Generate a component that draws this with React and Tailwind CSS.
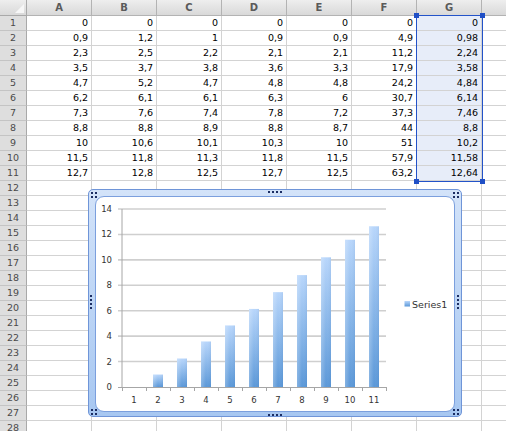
import React from 'react';

const cols = ['A', 'B', 'C', 'D', 'E', 'F', 'G'];

const data = [
    ['0', '0', '0', '0', '0', '0', '0'],
    ['0,9', '1,2', '1', '0,9', '0,9', '4,9', '0,98'],
    ['2,3', '2,5', '2,2', '2,1', '2,1', '11,2', '2,24'],
    ['3,5', '3,7', '3,8', '3,6', '3,3', '17,9', '3,58'],
    ['4,7', '5,2', '4,7', '4,8', '4,8', '24,2', '4,84'],
    ['6,2', '6,1', '6,1', '6,3', '6', '30,7', '6,14'],
    ['7,3', '7,6', '7,4', '7,8', '7,2', '37,3', '7,46'],
    ['8,8', '8,8', '8,9', '8,8', '8,7', '44', '8,8'],
    ['10', '10,6', '10,1', '10,3', '10', '51', '10,2'],
    ['11,5', '11,8', '11,3', '11,8', '11,5', '57,9', '11,58'],
    ['12,7', '12,8', '12,5', '12,7', '12,5', '63,2', '12,64'],
];

// series plotted in the chart = column G
const series = [0, 0.98, 2.24, 3.58, 4.84, 6.14, 7.46, 8.8, 10.2, 11.58, 12.64];

const ROWS = 28;

function HeaderRow() {
    return (
        <div className="flex h-[16px]">
            <div className="relative w-[27px] shrink-0 border-r border-b border-[#a9a9a9] bg-gradient-to-b from-[#eeeeee] to-[#d9d9d9]">
                <div className="absolute right-[2px] bottom-[2px] w-0 h-0 border-l-[9px] border-l-transparent border-b-[9px] border-b-[#f7f7f7]" />
            </div>
            {cols.map(c => (
                <div key={c} className="w-[65px] shrink-0 border-r border-b border-[#b3b3b3] bg-gradient-to-b from-[#eeeeee] to-[#d9d9d9] flex items-center justify-center text-[10px] font-bold text-[#5a5a5a]">
                    {c}
                </div>
            ))}
            <div className="flex-1 border-b border-[#b3b3b3] bg-gradient-to-b from-[#eeeeee] to-[#d9d9d9]" />
        </div>
    );
}

function Row({ n }) {
    const values = data[n - 1] || [];
    return (
        <div className="flex h-[15px]">
            <div className="w-[27px] shrink-0 border-r border-b border-r-[#a9a9a9] border-b-[#c4c4c4] bg-[#dedede] flex items-center justify-center text-[9.5px] text-[#4a4a4a]">
                {n}
            </div>
            {cols.map((c, i) => (
                <div
                    key={c}
                    className={`w-[65px] shrink-0 border-r border-b border-[#d3d3d3] flex items-center justify-end pr-[3px] text-[9.5px] text-black ${i === 6 && n <= 11 ? 'bg-[#e7edf9]' : 'bg-white'}`}
                >
                    {values[i]}
                </div>
            ))}
            <div className="flex-1 border-b border-[#d3d3d3] bg-white" />
        </div>
    );
}

function Dots({ vertical, grid, className }) {
    const dot = 'w-[2px] h-[2px] bg-[#1b2d63]';
    if (grid) {
        return (
            <div className={`absolute grid grid-cols-2 gap-[2px] ${className}`}>
                <div className={dot} /><div className={dot} /><div className={dot} /><div className={dot} />
            </div>
        );
    }
    return (
        <div className={`absolute flex ${vertical ? 'flex-col' : ''} gap-[2px] ${className}`}>
            <div className={dot} /><div className={dot} /><div className={dot} /><div className={dot} />
        </div>
    );
}

function BarChart() {
    const x0 = 27;
    const y0 = 191;
    const unit = 178 / 14;
    const cat = 24;
    const ticks = [0, 2, 4, 6, 8, 10, 12, 14];

    return (
        <svg width="360" height="216" className="block" style={{ fontFamily: '"DejaVu Sans", sans-serif' }}>
            <defs>
                <linearGradient id="bar" x1="0" y1="0" x2="0" y2="1">
                    <stop offset="0" stopColor="#b8d6fb" />
                    <stop offset="1" stopColor="#5b98d8" />
                </linearGradient>
                <linearGradient id="barShade" x1="0" y1="0" x2="1" y2="0">
                    <stop offset="0" stopColor="#ffffff" stopOpacity="0.25" />
                    <stop offset="0.5" stopColor="#ffffff" stopOpacity="0" />
                    <stop offset="1" stopColor="#1d4f8f" stopOpacity="0.08" />
                </linearGradient>
            </defs>

            {ticks.map(t => {
                const y = y0 - t * unit;
                return (
                    <g key={t}>
                        {t > 0 && <line x1={x0 - 4} y1={y} x2={x0 + cat * 11} y2={y} stroke="#cfcfcf" strokeWidth="1.6" />}
                        <text x="17" y={y + 3} textAnchor="end" fontSize="8.5" fill="#333">{t}</text>
                    </g>
                );
            })}

            {series.map((v, i) => {
                const h = v * unit;
                const cx = x0 + cat * i + 12;
                return (
                    <g key={i}>
                        <rect x={cx - 5} y={y0 - h} width="10" height={h} fill="url(#bar)" />
                        <rect x={cx - 5} y={y0 - h} width="10" height={h} fill="url(#barShade)" />
                        <text x={cx} y="207" textAnchor="middle" fontSize="8.5" fill="#333">{i + 1}</text>
                    </g>
                );
            })}

            <line x1={x0} y1={y0 - 14 * unit} x2={x0} y2={y0} stroke="#a6a6a6" strokeWidth="1" />
            <line x1={x0 - 4} y1={y0 + 0.5} x2={x0 + cat * 11} y2={y0 + 0.5} stroke="#a6a6a6" strokeWidth="1" />
            {Array.from({ length: 12 }).map((_, k) => (
                <line key={k} x1={x0 + cat * k + 0.5} y1={y0} x2={x0 + cat * k + 0.5} y2={y0 + 4} stroke="#a6a6a6" strokeWidth="1" />
            ))}

            {/* legend */}
            <rect x="309.5" y="105" width="5.5" height="5.5" fill="url(#bar)" />
            <text x="317" y="111.5" fontSize="9.5" fill="#333">Series1</text>
        </svg>
    );
}

function ChartFrame() {
    return (
        <div className="absolute left-[88px] top-[189px] w-[374px] h-[228px] rounded-[5px] border border-[#6f95d8] bg-gradient-to-b from-[#d3e3f9] to-[#a7c7f1] pt-[6px] px-[6px] pb-[4px]">
            <div className="w-[360px] h-[216px] bg-white rounded-[9px] border border-[#7b9fdd] overflow-hidden">
                <div className="-m-px">
                    <BarChart />
                </div>
            </div>
            <Dots grid className="left-[2px] top-[2px]" />
            <Dots grid className="left-[364px] top-[2px]" />
            <Dots grid className="left-[2px] top-[219px]" />
            <Dots grid className="left-[364px] top-[219px]" />
            <Dots className="left-[179px] top-[1px]" />
            <Dots className="left-[179px] top-[224px]" />
            <Dots vertical className="left-[1px] top-[105px]" />
            <Dots vertical className="left-[368px] top-[105px]" />
        </div>
    );
}

function Selection() {
    const handle = 'absolute w-[5px] h-[5px] bg-[#1f4fc6]';
    return (
        <div className="absolute left-[416px] top-[15px] w-[67px] h-[167px] border-[1.5px] border-[#2353c9] pointer-events-none">
            <div className={`${handle} -left-[3px] -top-[3px]`} />
            <div className={`${handle} -right-[3px] -top-[3px]`} />
            <div className={`${handle} -left-[3px] -bottom-[3px]`} />
            <div className={`${handle} -right-[3px] -bottom-[3px]`} />
        </div>
    );
}

export default function App() {
    return (
        <div className="relative w-[506px] h-[431px] overflow-hidden bg-white" style={{ fontFamily: '"DejaVu Sans", Verdana, sans-serif' }}>
            <HeaderRow />
            {Array.from({ length: ROWS }).map((_, i) => (
                <Row key={i} n={i + 1} />
            ))}
            <Selection />
            <ChartFrame />
        </div>
    );
}
